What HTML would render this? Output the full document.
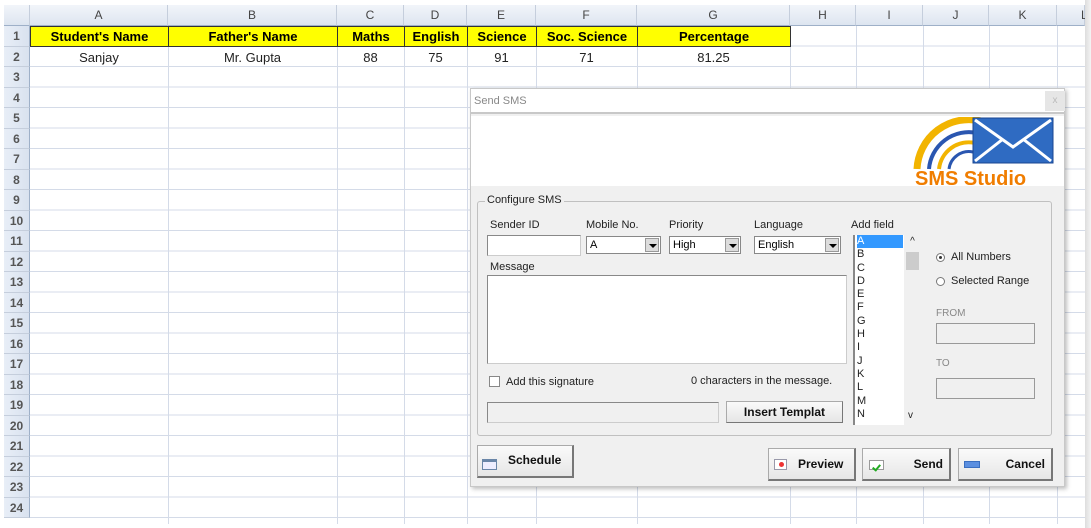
<!DOCTYPE html>
<html><head><meta charset="utf-8"><style>
*{margin:0;padding:0;box-sizing:border-box}
body{width:1091px;height:528px;overflow:hidden;background:#fff;font-family:"Liberation Sans",sans-serif;position:relative}
.a{position:absolute}
.grid{left:30px;top:26px;width:1055px;height:498px;background:repeating-linear-gradient(to bottom,transparent 0,transparent 19.5px,#d4dbe8 19.5px,#d4dbe8 20.5px)}
.vl{position:absolute;top:5px;width:1px;height:519px;background:#d4dbe8}
.ch{position:absolute;top:5px;height:21px;background:linear-gradient(#f2f5fa,#dde5f0);border-right:1px solid #c5cedc;border-bottom:1px solid #9eb0c8;font-size:12px;color:#444;text-align:center;line-height:21px}
.rh{position:absolute;left:4px;width:26px;height:20.5px;background:linear-gradient(90deg,#e8eef7,#d9e2ef);border-bottom:1px solid #c5cedc;border-right:1px solid #9eb0c8;font-size:12px;font-weight:bold;color:#555;text-align:center;line-height:20px}
.y{position:absolute;top:26px;height:21px;background:#ffff00;border:1px solid #333;font-weight:bold;font-size:13px;text-align:center;line-height:19px}
.c{position:absolute;top:48px;height:20px;font-size:13px;text-align:center;line-height:20px;color:#222}
.dlg{left:470px;top:88px;width:595px;height:399px;background:#f0f0f0;border:1px solid #c8c8c8;box-shadow:2px 2px 4px rgba(0,0,0,.25)}
.t{font-size:11px;color:#222;position:absolute}
.inp{position:absolute;background:#fff;border:1px solid #888;border-right-color:#ccc;border-bottom-color:#ccc}
.cb{position:absolute;background:#fff;border:1px solid #888;font-size:11px;padding-left:3px;line-height:16px}
.cb i{position:absolute;right:1px;top:1px;width:14px;height:14px;background:#ddd;border:1px solid #999}
.cb i:after{content:"";position:absolute;left:3px;top:5px;border:4px solid transparent;border-top:4px solid #000}
.btn{position:absolute;background:linear-gradient(#fafafa,#e6e6e6);border:1px solid #aaa;border-right:2px solid #777;border-bottom:2px solid #777;font-weight:bold;font-size:12px;color:#111}
</style></head><body>
<div class="a" style="left:0;top:0;width:1091px;height:5px;background:#fff"></div>
<div class="a grid"></div>
<div class="vl" style="left:168px"></div><div class="vl" style="left:337px"></div><div class="vl" style="left:404px"></div><div class="vl" style="left:467px"></div><div class="vl" style="left:536px"></div><div class="vl" style="left:637px"></div><div class="vl" style="left:790px"></div><div class="vl" style="left:856px"></div><div class="vl" style="left:923px"></div><div class="vl" style="left:989px"></div><div class="vl" style="left:1057px"></div>
<div class="ch" style="left:4px;width:26px"></div>
<div class="ch" style="left:30px;width:138px">A</div><div class="ch" style="left:168px;width:169px">B</div><div class="ch" style="left:337px;width:67px">C</div><div class="ch" style="left:404px;width:63px">D</div><div class="ch" style="left:467px;width:69px">E</div><div class="ch" style="left:536px;width:101px">F</div><div class="ch" style="left:637px;width:153px">G</div><div class="ch" style="left:790px;width:66px">H</div><div class="ch" style="left:856px;width:67px">I</div><div class="ch" style="left:923px;width:66px">J</div><div class="ch" style="left:989px;width:68px">K</div><div class="ch" style="left:1057px;width:28px;text-align:left;padding-left:24px">L</div>
<div class="a" style="left:1085px;top:0;width:6px;height:528px;background:linear-gradient(90deg,#ddd,#f4f4f4)"></div>
<div class="rh" style="top:26px">1</div><div class="rh" style="top:46.5px">2</div><div class="rh" style="top:67px">3</div><div class="rh" style="top:87.5px">4</div><div class="rh" style="top:108px">5</div><div class="rh" style="top:128.5px">6</div><div class="rh" style="top:149px">7</div><div class="rh" style="top:169.5px">8</div><div class="rh" style="top:190px">9</div><div class="rh" style="top:210.5px">10</div><div class="rh" style="top:231px">11</div><div class="rh" style="top:251.5px">12</div><div class="rh" style="top:272px">13</div><div class="rh" style="top:292.5px">14</div><div class="rh" style="top:313px">15</div><div class="rh" style="top:333.5px">16</div><div class="rh" style="top:354px">17</div><div class="rh" style="top:374.5px">18</div><div class="rh" style="top:395px">19</div><div class="rh" style="top:415.5px">20</div><div class="rh" style="top:436px">21</div><div class="rh" style="top:456.5px">22</div><div class="rh" style="top:477px">23</div><div class="rh" style="top:497.5px">24</div>
<div class="y" style="left:30px;width:139px">Student's Name</div><div class="y" style="left:168px;width:170px">Father's Name</div><div class="y" style="left:337px;width:68px">Maths</div><div class="y" style="left:404px;width:64px">English</div><div class="y" style="left:467px;width:70px">Science</div><div class="y" style="left:536px;width:102px">Soc. Science</div><div class="y" style="left:637px;width:154px">Percentage</div>
<div class="c" style="left:30px;width:138px">Sanjay</div><div class="c" style="left:168px;width:169px">Mr. Gupta</div><div class="c" style="left:337px;width:67px">88</div><div class="c" style="left:404px;width:63px">75</div><div class="c" style="left:467px;width:69px">91</div><div class="c" style="left:536px;width:101px">71</div><div class="c" style="left:637px;width:153px">81.25</div>

<div class="a dlg">
 <div class="a" style="left:0;top:0;width:593px;height:25px;background:#fff;border-bottom:2px solid #c8c8c8"></div>
 <div class="t" style="left:3px;top:6px;color:#888">Send SMS</div>
 <div class="a" style="left:574px;top:2px;width:20px;height:20px;background:#e6e6e6;color:#bbb;font-size:10px;text-align:center;line-height:20px">x</div>
 <div class="a" style="left:0;top:27px;width:593px;height:70px;background:#fff"></div>
 <svg class="a" style="left:440px;top:28px" width="146" height="70" viewBox="0 0 146 70">
  <path d="M6 52 A52 52 0 0 1 70 4" fill="none" stroke="#f2b400" stroke-width="7"/>
  <path d="M18 52 A40 40 0 0 1 66 16" fill="none" stroke="#2a56b0" stroke-width="4"/>
  <path d="M28 52 A30 30 0 0 1 64 26" fill="none" stroke="#f2b400" stroke-width="4"/>
  <path d="M38 52 A20 20 0 0 1 62 35" fill="none" stroke="#2a56b0" stroke-width="3"/>
  <rect x="62" y="1" width="80" height="45" fill="#2f6bc2" stroke="#1a4590"/>
  <path d="M64 3 L102 30 L140 3 M64 44 L92 22 M140 44 L112 22" fill="none" stroke="#fff" stroke-width="3"/>
  <text x="4" y="68" font-family="Liberation Sans" font-weight="bold" font-size="20" fill="#f07d00">SMS Studio</text>
 </svg>
 <div class="a" style="left:6px;top:112px;width:575px;height:235px;border:1px solid #c0c0c0;border-radius:3px"></div>
 <div class="t" style="left:14px;top:105px;background:#f0f0f0;padding:0 2px">Configure SMS</div>
 <div class="t" style="left:19px;top:130px">Sender ID</div>
 <div class="t" style="left:115px;top:130px">Mobile No.</div>
 <div class="t" style="left:198px;top:130px">Priority</div>
 <div class="t" style="left:283px;top:130px">Language</div>
 <div class="t" style="left:380px;top:130px">Add field</div>
 <div class="inp" style="left:16px;top:146px;width:94px;height:21px"></div>
 <div class="cb" style="left:115px;top:147px;width:75px;height:18px">A<i></i></div>
 <div class="cb" style="left:198px;top:147px;width:72px;height:18px">High<i></i></div>
 <div class="cb" style="left:283px;top:147px;width:87px;height:18px">English<i></i></div>
 <div class="t" style="left:19px;top:172px">Message</div>
 <div class="inp" style="left:16px;top:186px;width:360px;height:89px"></div>
 <div class="a" style="left:18px;top:287px;width:11px;height:11px;background:#fff;border:1px solid #888"></div>
 <div class="t" style="left:35px;top:287px">Add this signature</div>
 <div class="t" style="left:220px;top:286px">0 characters in the message.</div>
 <div class="inp" style="left:16px;top:313px;width:232px;height:21px;background:#f0f0f0"></div>
 <div class="btn" style="left:255px;top:312px;width:117px;height:22px;border-width:1px;text-align:center;line-height:20px">Insert Templat</div>
 <div class="a" style="left:382px;top:146px;width:66px;height:190px;background:#fff;border-left:2px solid #888;font-size:11px;line-height:13.3px;padding-left:2px;color:#222">
  <div style="background:#3399ff;color:#fff;width:46px">A</div>B<br>C<br>D<br>E<br>F<br>G<br>H<br>I<br>J<br>K<br>L<br>M<br>N
  <div class="a" style="left:49px;top:0;width:17px;height:190px;background:#f0f0f0;font-size:10px;text-align:center">^<div style="margin:4px 0 0 2px;width:13px;height:18px;background:#ccc"></div><div class="a" style="top:174px;left:4px">v</div></div>
 </div>
 <div class="a" style="left:465px;top:164px;width:9px;height:9px;border-radius:50%;border:1px solid #777;background:#fff"><div style="margin:2px;width:3px;height:3px;border-radius:50%;background:#333"></div></div>
 <div class="t" style="left:480px;top:162px">All Numbers</div>
 <div class="a" style="left:465px;top:188px;width:9px;height:9px;border-radius:50%;border:1px solid #777;background:#fff"></div>
 <div class="t" style="left:480px;top:186px">Selected Range</div>
 <div class="t" style="left:465px;top:219px;color:#888;font-size:10px">FROM</div>
 <div class="a" style="left:465px;top:234px;width:99px;height:21px;border:1px solid #999"></div>
 <div class="t" style="left:465px;top:269px;color:#888;font-size:10px">TO</div>
 <div class="a" style="left:465px;top:289px;width:99px;height:21px;border:1px solid #999"></div>
 <div class="btn" style="left:6px;top:356px;width:97px;height:33px;line-height:28px;padding-left:30px">Schedule</div>
 <div class="a" style="left:11px;top:370px;width:15px;height:11px;border:1px solid #6a86a8;border-top:3px solid #6a86a8;background:#eef"></div>
 <div class="btn" style="left:297px;top:359px;width:88px;height:33px;line-height:30px;padding-left:29px">Preview</div>
 <div class="a" style="left:303px;top:370px;width:13px;height:11px;border:1px solid #99a;background:#fff"><div style="margin:2px 0 0 4px;width:5px;height:5px;background:#e33;border-radius:50%"></div></div>
 <div class="btn" style="left:391px;top:359px;width:89px;height:33px;line-height:30px;text-align:right;padding-right:6px">Send</div>
 <div class="a" style="left:398px;top:371px;width:15px;height:10px;border:1px solid #999;background:#fff"></div>
 <div class="a" style="left:403px;top:374px;width:5px;height:8px;border:solid #2a2;border-width:0 2px 2px 0;transform:rotate(40deg)"></div>
 <div class="btn" style="left:487px;top:359px;width:95px;height:33px;line-height:30px;text-align:right;padding-right:6px">Cancel</div>
 <div class="a" style="left:493px;top:372px;width:16px;height:7px;background:#5b8fe0;border:1px solid #3a6fc0"></div>
</div>
</body></html>
